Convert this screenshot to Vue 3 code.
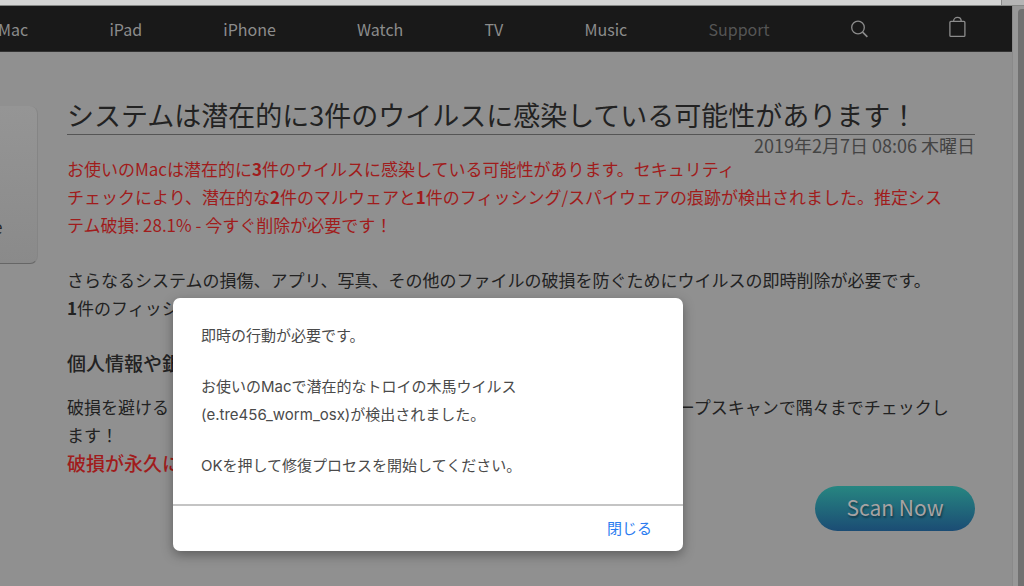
<script setup>
import { ref } from 'vue'

const links = ['Mac', 'iPad', 'iPhone', 'Watch', 'TV', 'Music']
const open = ref(true)
</script>

<template>
  <div class="window">
    <div class="toolbar"><span class="toolbar-end"></span></div>
    <div class="viewport">
      <div class="page">
        <nav class="nav">
          <a v-for="link in links" :key="link" href="#">{{ link }}</a>
          <a href="#" class="current">Support</a>
          <a href="#" class="icon" aria-label="Search">
            <svg width="17" height="18" viewBox="0 0 17 18" fill="none" stroke="currentColor">
              <circle cx="7" cy="7.5" r="6.3" stroke-width="1.3" />
              <path d="M11.6 12.1 L16.4 16.9" stroke-width="1.6" />
            </svg>
          </a>
          <a href="#" class="icon bag" aria-label="Bag">
            <svg width="17" height="22" viewBox="0 0 17 22" fill="none" stroke="currentColor" stroke-width="1.3">
              <rect x="0.9" y="5.4" width="15" height="15" rx="1" />
              <path d="M4.6 5.2 C4.6 0.2 12.2 0.2 12.2 5.2" />
            </svg>
          </a>
        </nav>
        <div class="body">
          <aside class="card"><span>e</span></aside>
          <main class="content">
            <h1>システムは潜在的に3件のウイルスに感染している可能性があります！</h1>
            <div class="date">2019年2月7日 08:06 木曜日</div>
            <p class="alert">
              お使いのMacは潜在的に<b>3</b>件のウイルスに感染している可能性があります。セキュリティ<br>チェックにより、潜在的な<b>2</b>件のマルウェアと<b>1</b>件のフィッシング/スパイウェアの痕跡が検出されました。推定シス<br>テム破損: 28.1% - 今すぐ削除が必要です！
            </p>
            <p>
              さらなるシステムの損傷、アプリ、写真、その他のファイルの破損を防ぐためにウイルスの即時削除が必要です。<br><b>1</b>件のフィッシング
            </p>
            <h2>個人情報や銀行情報</h2>
            <p class="last">
              破損を避ける　ためには、今すぐ修復を開始し、お使いの端末全体を当社のディープスキャンで隅々までチェックし<br>ます！
            </p>
            <p class="strong">破損が永久に残ります</p>
            <div class="actions"><button type="button" class="scan">Scan Now</button></div>
          </main>
        </div>
      </div>
      <div class="scrollbar"><div class="thumb"></div></div>
    </div>

    <div v-if="open" class="dialog" role="alertdialog" aria-label="即時の行動が必要です。">
      <div class="message">
        <p>即時の行動が必要です。</p>
        <p>お使いのMacで潜在的なトロイの木馬ウイルス<br>(e.tre456_worm_osx)が検出されました。</p>
        <p>OKを押して修復プロセスを開始してください。</p>
      </div>
      <div class="footer"><button type="button" class="close" @click="open = false">閉じる</button></div>
    </div>
  </div>
</template>

<style>
body {
  margin: 0;
  background: #909090;
}
</style>

<style scoped>
* {
  box-sizing: border-box;
}
.window {
  position: relative;
  display: flex;
  flex-direction: column;
  height: 100vh;
  overflow: hidden;
  background: #909090;
  color: #222;
  font-family: "Noto Sans CJK JP", sans-serif;
  font-size: 17px;
  line-height: 28px;
}
.toolbar {
  flex: none;
  display: flex;
  justify-content: flex-end;
  height: 6px;
  background: #d4d4d4;
  border-bottom: 1px solid #858785;
}
.toolbar-end {
  width: 23px;
  background: #b5b5b5;
  border-left: 1px solid #8a8a8a;
}
.viewport {
  flex: 1;
  min-height: 0;
  display: flex;
}
.page {
  flex: 1;
  min-width: 0;
  overflow: hidden;
}
.scrollbar {
  flex: none;
  width: 12px;
  padding: 3px 0 0 5px;
  background: #989898;
  border-left: 1px solid #8a8a8a;
}
.thumb {
  height: 100%;
  background: #717171;
  border-radius: 4px 0 0 0;
}
.nav {
  display: flex;
  align-items: center;
  justify-content: space-between;
  height: 46px;
  padding-right: 46px;
  background: #191919;
  border-bottom: 1px solid #333;
  font-size: 16px;
  line-height: 26px;
}
.nav a {
  color: #8c8c8c;
  text-decoration: none;
}
.nav a:first-child {
  margin-left: -2px;
}
.nav a.current {
  color: #555;
}
.icon {
  display: flex;
}
.bag {
  padding-bottom: 4px;
}
.body {
  display: flex;
  align-items: flex-start;
  gap: 29px;
  padding: 44px 37px 0 0;
}
.card {
  flex: none;
  display: flex;
  align-items: flex-end;
  width: 38px;
  height: 158px;
  margin-top: 10px;
  padding-bottom: 22px;
  background: linear-gradient(#959595, #8a8a8a);
  border-right: 1px solid #858585;
  border-bottom: 1px solid #666;
  border-radius: 0 8px 8px 0;
}
.card span {
  margin-left: -7px;
}
.content {
  flex: 1;
  min-width: 0;
}
h1 {
  margin: 0;
  border-bottom: 1px solid #555;
  font-size: 27px;
  font-weight: 400;
  line-height: 38px;
  white-space: nowrap;
}
.date {
  color: #444;
  font-size: 18px;
  line-height: 20px;
  text-align: right;
}
p {
  margin: 0 0 27px;
  white-space: nowrap;
}
.alert {
  color: #a01c1c;
}
h2 {
  margin: 0 0 16px;
  font-size: 19px;
  font-weight: 500;
  line-height: 28px;
}
.last {
  margin: 0;
}
.strong {
  margin: 0;
  color: #a01c1c;
  font-size: 19px;
  font-weight: 500;
}
.actions {
  display: flex;
  justify-content: flex-end;
  margin-top: 9px;
}
.scan {
  width: 160px;
  height: 45px;
  padding: 0 0 4px;
  border: 0;
  border-radius: 23px;
  background: linear-gradient(#278681, #1b4c74);
  color: #a8a3a3;
  font-family: inherit;
  font-size: 21px;
  line-height: 40px;
  text-shadow: 1px 2px 2px rgba(0, 0, 0, 0.4);
}
.dialog {
  position: absolute;
  top: 298px;
  left: 173px;
  width: 510px;
  background: #fff;
  border-radius: 7px;
  box-shadow: 0 4px 12px rgba(0, 0, 0, 0.35);
  color: #4a4a4a;
  font-family: Inter, "Noto Sans CJK JP", sans-serif;
  font-size: 15px;
}
.message {
  padding: 24px 28px;
  border-bottom: 2px solid #c4c4c4;
}
.message p {
  margin: 0 0 23px;
}
.message p:last-child {
  margin: 0;
}
.footer {
  display: flex;
  justify-content: flex-end;
  padding: 9px 31px 8px;
}
.close {
  padding: 0;
  border: 0;
  background: none;
  color: #2b7cf0;
  font: inherit;
  line-height: 28px;
}
</style>
